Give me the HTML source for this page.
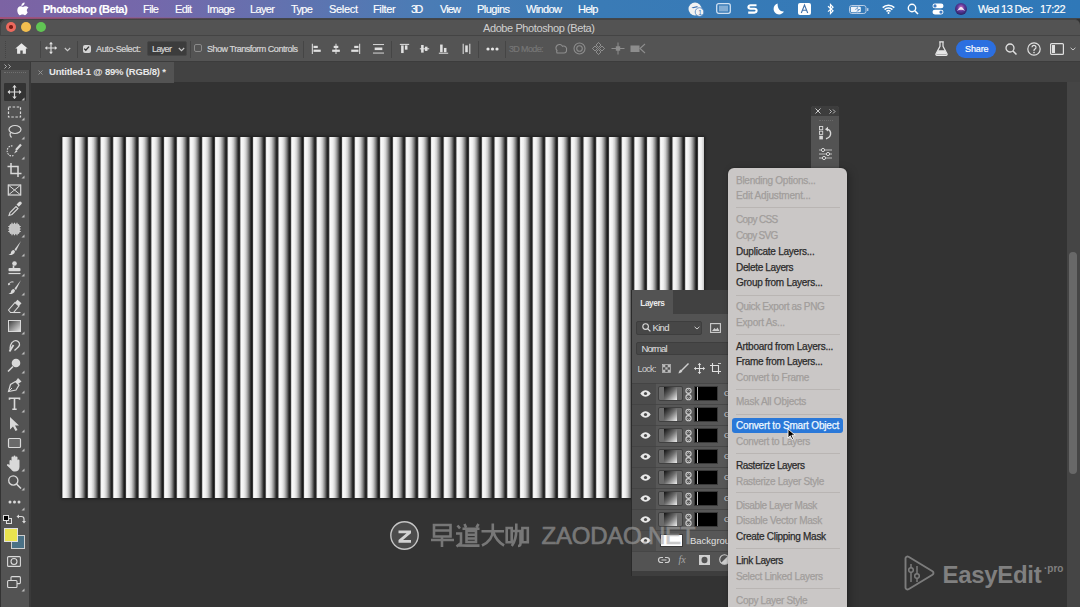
<!DOCTYPE html>
<html><head><meta charset="utf-8">
<style>
*{margin:0;padding:0;box-sizing:border-box}
html,body{width:1080px;height:607px;overflow:hidden;background:#323232;font-family:"Liberation Sans",sans-serif}
.a{position:absolute}
svg{position:absolute;overflow:visible}
#menubar{left:0;top:0;width:1080px;height:17.5px;background:linear-gradient(90deg,#7c63a3 0px,#7468ab 150px,#6670ae 260px,#4b7cb5 420px,#3a7bb6 600px,#2f78b8 1080px)}
#menubar .m{position:absolute;top:3px;font-size:11px;line-height:12px;color:#fff;white-space:nowrap;letter-spacing:-0.1px}
#titlebar{left:0;top:19px;width:1080px;height:16px;background:#535353;border-radius:6px 6px 0 0;box-shadow:inset 1px 1px 0 #444}
#opts .t{-webkit-text-stroke:0.2px currentColor}
#menubar .m{-webkit-text-stroke:0.15px currentColor}
#opts{left:0;top:35px;width:1080px;height:27px;background:#545454;border-top:1px solid #444;border-bottom:1px solid #3c3c3c}
.sep{position:absolute;top:5px;width:1px;height:17px;background:#454545}
#tabs{left:30px;top:62px;width:1050px;height:20px;background:#424242}
#tab{left:31px;top:62px;width:143px;height:21px;background:#535353}
#tool{left:1px;top:70px;width:28px;height:537px;background:#535353}
#toolhead{left:0;top:62px;width:30px;height:8px;background:#424242}
#canvasbg{left:0;top:82px;width:1067px;height:525px;background:#333333}
#doc{left:62px;top:137px;width:642px;height:361px;overflow:hidden;box-shadow:0 0 3px 1px rgba(0,0,0,.45)}
#stripes{left:-1.41px;top:0;width:660px;height:361px;background:repeating-linear-gradient(90deg,#1a1a1a 0px,#3a3a3a 1px,#e2e2e2 1.8px,#fafafa 2.6px,#eeeeee 5px,#d0d0d0 7px,#969696 9px,#606060 10.5px,#333333 11.6px,#1a1a1a 12.71px)}
#scroll{left:1067px;top:82px;width:13px;height:525px;background:#454545}
#thumb{left:1069px;top:252px;width:8px;height:222px;background:#686868;border-radius:4px}
.t{position:absolute;white-space:nowrap}
.mi{font-size:10px;line-height:12px;letter-spacing:-0.2px;-webkit-text-stroke:0.25px currentColor}
</style></head><body>
<div id="menubar" class="a">
  <svg style="left:17px;top:2px" width="11" height="14" viewBox="0 0 11 14"><path d="M7.6 0.5c0.1 1-0.3 1.9-0.9 2.5-0.6 0.7-1.5 1-2.3 1-0.1-0.9 0.3-1.9 0.9-2.5 0.6-0.6 1.5-1 2.3-1zM10.6 10.3c-0.5 1.1-1.4 2.9-2.6 2.9-1 0-1.3-0.6-2.5-0.6s-1.6 0.6-2.5 0.6C1.8 13.2 0.3 10.6 0.3 8.2c0-2.6 1.7-3.9 3.2-3.9 1 0 1.7 0.6 2.5 0.6 0.7 0 1.5-0.7 2.7-0.7 0.5 0 2 0.1 2.8 1.5-2.4 1.3-2 4.6 0.1 4.6z" fill="#fff"/></svg>
  <span class="m" style="letter-spacing:-0.465px;left:43px;font-weight:bold;">Photoshop (Beta)</span>
  <span class="m" style="letter-spacing:-0.578px;left:143px">File</span>
  <span class="m" style="letter-spacing:-0.656px;left:175px">Edit</span>
  <span class="m" style="letter-spacing:-0.645px;left:207px">Image</span>
  <span class="m" style="letter-spacing:-0.633px;left:250px">Layer</span>
  <span class="m" style="letter-spacing:-0.620px;left:291px">Type</span>
  <span class="m" style="letter-spacing:-0.316px;left:329px">Select</span>
  <span class="m" style="letter-spacing:-0.351px;left:373px">Filter</span>
  <span class="m" style="letter-spacing:-1.762px;left:411px">3D</span>
  <span class="m" style="letter-spacing:-0.885px;left:440px">View</span>
  <span class="m" style="letter-spacing:-0.513px;left:477px">Plugins</span>
  <span class="m" style="letter-spacing:-0.625px;left:526px">Window</span>
  <span class="m" style="letter-spacing:-0.775px;left:578px">Help</span>
  <!-- status icons -->
  <svg style="left:688px;top:2px" width="17" height="15" viewBox="0 0 17 15"><circle cx="7" cy="7" r="6.5" fill="#f2f2f2"/><path d="M3.5 5.5l6-1.5v1.2l-4.5 1z" fill="#3a6fb0"/><circle cx="11.5" cy="10" r="4.3" fill="#f2f2f2" stroke="#4a80c0" stroke-width="0.8"/><text x="10.2" y="12.6" font-size="6.5" fill="#3a6fb0" font-family="Liberation Sans">1</text></svg>
  <svg style="left:716px;top:3px" width="15" height="11" viewBox="0 0 15 11"><rect x="0.7" y="0.7" width="13.6" height="9.6" rx="2" fill="none" stroke="#cfe0f2" stroke-width="1.3"/><rect x="3" y="2.6" width="9" height="5.8" fill="#cfe0f2" opacity=".5"/></svg>
  <svg style="left:747px;top:3px" width="11" height="12" viewBox="0 0 11 12"><path d="M9.5 2.2H3.6c-1.4 0-2.2 0.8-2.2 1.8s0.8 1.7 2.2 1.7h3.8c1.4 0 2.2 0.8 2.2 1.9s-0.8 2-2.2 2H1.2" fill="none" stroke="#fff" stroke-width="2.1"/></svg>
  <svg style="left:773px;top:3px" width="11" height="12" viewBox="0 0 11 12"><path d="M4.6 0.6C2.2 1.3 0.6 3.5 0.6 6c0 3 2.5 5.4 5.5 5.4 2.1 0 3.9-1.2 4.8-2.9C7.6 9 4.4 6.3 4.6 0.6z" fill="#fff"/></svg>
  <svg style="left:798px;top:3px" width="13" height="12" viewBox="0 0 13 12"><rect x="0" y="0" width="13" height="12" rx="2" fill="#fff"/><path d="M3.3 10L6.5 2l3.2 8M4.5 7.3h4" fill="none" stroke="#3f6fa8" stroke-width="1.1"/></svg>
  <svg style="left:827px;top:3px" width="8" height="12" viewBox="0 0 8 12"><path d="M1 3.3l5 4.5-2.5 2.6V1.6L6 4.2 1 8.6" fill="none" stroke="#fff" stroke-width="1.2"/></svg>
  <svg style="left:849px;top:5px" width="20" height="9" viewBox="0 0 20 9"><rect x="0.5" y="0.5" width="16.5" height="8" rx="2.2" fill="none" stroke="#b8cde6" stroke-width="1"/><rect x="1.8" y="1.8" width="10" height="5.4" rx="1" fill="#eef3f9"/><rect x="18" y="3" width="1.4" height="3" rx="0.6" fill="#b8cde6"/><path d="M9.8 0.8L5.8 4.8h2.6L7 8.4l4.2-4.3H8.6z" fill="#3a78b8"/><path d="M10.3 1.2L6.8 4.5h2.4L8 7.6" fill="none" stroke="#fff" stroke-width="0.6"/></svg>
  <svg style="left:882px;top:4px" width="13" height="10" viewBox="0 0 13 10"><path d="M0.7 3.6a8.3 8.3 0 0 1 11.6 0M2.6 5.6a5.5 5.5 0 0 1 7.8 0M4.5 7.5a2.6 2.6 0 0 1 4 0" fill="none" stroke="#fff" stroke-width="1.5"/><circle cx="6.5" cy="8.9" r="1" fill="#fff"/></svg>
  <svg style="left:907px;top:3px" width="12" height="12" viewBox="0 0 12 12"><circle cx="5" cy="5" r="3.7" fill="none" stroke="#fff" stroke-width="1.4"/><path d="M7.8 7.8l3.2 3.2" stroke="#fff" stroke-width="1.6"/></svg>
  <svg style="left:932px;top:3px" width="12" height="12" viewBox="0 0 12 12"><rect x="0.5" y="0.5" width="11" height="4.8" rx="2.4" fill="#fff"/><circle cx="3" cy="2.9" r="1.6" fill="#3f7bc2"/><rect x="0.5" y="6.7" width="11" height="4.8" rx="2.4" fill="#fff"/><circle cx="9" cy="9.1" r="1.6" fill="#3f7bc2"/></svg>
  <svg style="left:955px;top:3px" width="12" height="12" viewBox="0 0 12 12"><defs><radialGradient id="sg" cx="50%" cy="40%" r="60%"><stop offset="0" stop-color="#e070c0"/><stop offset="0.5" stop-color="#5a3a9a"/><stop offset="1" stop-color="#2a2060"/></radialGradient></defs><circle cx="6" cy="6" r="6" fill="url(#sg)"/><path d="M2 8c1.5-2 2.5-4 4-4s2.5 2 4 4c-1.3-0.8-2.5-1.2-4-1.2S3.3 7.2 2 8z" fill="#fff" opacity=".85"/></svg>
  <span class="m" style="letter-spacing:-0.592px;left:978px;">Wed 13 Dec</span>
  <span class="m" style="letter-spacing:-0.508px;left:1040px">17:22</span>
</div>
<div class="a" style="left:0;top:17.5px;width:1080px;height:1.5px;background:#42464b"></div><div class="a" style="left:0;top:17.3px;width:240px;height:1.5px;background:linear-gradient(90deg,#a05078,rgba(150,90,140,0))"></div>
<div id="titlebar" class="a">
  <div class="a" style="left:6px;top:3px;width:10px;height:10px;border-radius:50%;background:#ec6a5e"><div class="a" style="left:3.2px;top:3.2px;width:3.6px;height:3.6px;border-radius:50%;background:#7a1a14"></div></div>
  <div class="a" style="left:21px;top:3px;width:10px;height:10px;border-radius:50%;background:#f4bf4f"></div>
  <div class="a" style="left:36px;top:3px;width:10px;height:10px;border-radius:50%;background:#61c554"></div>
  <span class="t" style="letter-spacing:-0.404px;left:483px;top:2.8px;font-size:11px;color:#cfcfcf;">Adobe Photoshop (Beta)</span>
</div>
<div id="opts" class="a">
  <div class="sep" style="left:5px;background:none;border-left:1px dotted #444"></div>
  <svg style="left:15px;top:7px" width="13" height="11" viewBox="0 0 13 11"><path d="M6.5 0.3L0.3 5.6h1.8V10.7h3.2V7.4h2.4v3.3h3.2V5.6h1.8z" fill="#e8e8e8"/></svg>
  <div class="sep" style="left:40px"></div>
  <svg style="left:45px;top:6px" width="12" height="12" viewBox="0 0 12 12"><path d="M6 0.5v11M0.5 6h11" stroke="#e0e0e0" stroke-width="1.1"/><path d="M6 0l-2 2.2h4zM6 12l-2-2.2h4zM0 6l2.2-2v4zM12 6l-2.2-2v4z" fill="#e0e0e0"/></svg>
  <svg style="left:64px;top:11px" width="7" height="5" viewBox="0 0 7 5"><path d="M0.8 1l2.7 2.7L6.2 1" fill="none" stroke="#c8c8c8" stroke-width="1.1"/></svg>
  <div class="sep" style="left:77px"></div>
  <div class="a" style="left:82.5px;top:8.5px;width:8.5px;height:8.5px;background:#d4d4d4;border-radius:2px"></div>
  <svg style="left:83px;top:9px" width="7" height="7" viewBox="0 0 7 7"><path d="M1.2 3.6l1.6 1.6 3.2-3.6" fill="none" stroke="#333" stroke-width="1.3"/></svg>
  <span class="t" style="letter-spacing:-0.366px;left:96px;top:8px;font-size:9px;color:#d6d6d6">Auto-Select:</span>
  <div class="a" style="left:147px;top:5px;width:40px;height:15px;background:#3c3c3c;border-radius:2px;border:1px solid #464646"></div>
  <span class="t" style="letter-spacing:-0.629px;left:152px;top:8px;font-size:9px;color:#d6d6d6">Layer</span>
  <svg style="left:178px;top:11px" width="7" height="5" viewBox="0 0 7 5"><path d="M0.8 1l2.7 2.7L6.2 1" fill="none" stroke="#c8c8c8" stroke-width="1.1"/></svg>
  <div class="sep" style="left:190px"></div>
  <div class="a" style="left:194px;top:8px;width:8px;height:8px;border:1px solid #8a8a8a;border-radius:2px"></div>
  <span class="t" style="letter-spacing:-0.479px;left:207px;top:8px;font-size:9px;color:#d6d6d6;">Show Transform Controls</span>
  <div class="sep" style="left:303px"></div>
  <svg style="left:311px;top:6px;transform:translateY(0.8px) scale(0.85)" width="11" height="12" viewBox="0 0 11 12"><path d="M0.6 0v12" stroke="#e0e0e0" stroke-width="1.2"/><rect x="2" y="2.5" width="5" height="2.6" fill="#e0e0e0"/><rect x="2" y="7" width="8.5" height="2.6" fill="#e0e0e0"/></svg>
  <svg style="left:331px;top:6px;transform:translateY(0.8px) scale(0.85)" width="10" height="12" viewBox="0 0 10 12"><path d="M5 0v12" stroke="#e0e0e0" stroke-width="1.2"/><rect x="2.3" y="2.5" width="5.4" height="2.6" fill="#e0e0e0"/><rect x="0.5" y="7" width="9" height="2.6" fill="#e0e0e0"/></svg>
  <svg style="left:350px;top:6px;transform:translateY(0.8px) scale(0.85)" width="11" height="12" viewBox="0 0 11 12"><path d="M10.4 0v12" stroke="#e0e0e0" stroke-width="1.2"/><rect x="4" y="2.5" width="5" height="2.6" fill="#e0e0e0"/><rect x="0.5" y="7" width="8.5" height="2.6" fill="#e0e0e0"/></svg>
  <svg style="left:372px;top:6px;transform:translateY(0.8px) scale(0.85)" width="13" height="12" viewBox="0 0 13 12"><path d="M0 1h13M0 11h13" stroke="#e0e0e0" stroke-width="1.1"/><rect x="2" y="4.5" width="9" height="3" fill="#e0e0e0"/></svg>
  <div class="sep" style="left:391px"></div>
  <svg style="left:399px;top:6px;transform:translateY(0.8px) scale(0.85)" width="11" height="12" viewBox="0 0 11 12"><path d="M0 0.8h11" stroke="#e0e0e0" stroke-width="1.2"/><rect x="1.5" y="2" width="3" height="9" fill="#e0e0e0"/><rect x="6" y="2" width="3" height="5" fill="#e0e0e0"/></svg>
  <svg style="left:419px;top:6px;transform:translateY(0.8px) scale(0.85)" width="11" height="12" viewBox="0 0 11 12"><path d="M0 6h11" stroke="#e0e0e0" stroke-width="1.2"/><rect x="1.5" y="1.5" width="3" height="9" fill="#e0e0e0"/><rect x="6" y="3.5" width="3" height="5" fill="#e0e0e0"/></svg>
  <svg style="left:438px;top:6px;transform:translateY(0.8px) scale(0.85)" width="11" height="12" viewBox="0 0 11 12"><path d="M0 11.2h11" stroke="#e0e0e0" stroke-width="1.2"/><rect x="1.5" y="1" width="3" height="9" fill="#e0e0e0"/><rect x="6" y="5" width="3" height="5" fill="#e0e0e0"/></svg>
  <svg style="left:462px;top:6px;transform:translateY(0.8px) scale(0.85)" width="9" height="12" viewBox="0 0 9 12"><path d="M0.6 0v12M8.4 0v12" stroke="#e0e0e0" stroke-width="1.2"/><rect x="3" y="2" width="3" height="8" fill="#e0e0e0"/></svg>
  <div class="sep" style="left:478px"></div>
  <svg style="left:486px;top:11px" width="13" height="4" viewBox="0 0 13 4"><circle cx="2" cy="2" r="1.6" fill="#e6e6e6"/><circle cx="6.5" cy="2" r="1.6" fill="#e6e6e6"/><circle cx="11" cy="2" r="1.6" fill="#e6e6e6"/></svg>
  <div class="sep" style="left:505px"></div>
  <span class="t" style="letter-spacing:-0.633px;left:509px;top:8px;font-size:9px;color:#767676">3D Mode:</span>
  <svg style="left:553px;top:6px" width="15" height="13" viewBox="0 0 15 13" opacity=".55"><path d="M4 8.5a3.5 3.5 0 1 1 5.5-4.2A3 3 0 0 1 13.5 8a2.5 2.5 0 0 1-2.5 3H4a2.5 2.5 0 0 1 0-2.5z" fill="none" stroke="#bdbdbd" stroke-width="1.1"/></svg>
  <svg style="left:573px;top:6px" width="13" height="13" viewBox="0 0 13 13" opacity=".55"><circle cx="6.5" cy="6.5" r="5.5" fill="none" stroke="#bdbdbd" stroke-width="1.1"/><circle cx="6.5" cy="6.5" r="2.8" fill="none" stroke="#bdbdbd" stroke-width="1.1"/></svg>
  <svg style="left:592px;top:6px" width="13" height="13" viewBox="0 0 13 13" opacity=".55"><path d="M6.5 0.5l2.5 2.5-2.5 2.5-2.5-2.5zM6.5 7.5l2.5 2.5-2.5 2.5-2.5-2.5zM0.5 6.5l2.5-2.5 2.5 2.5-2.5 2.5zM7.5 6.5l2.5-2.5 2.5 2.5-2.5 2.5z" fill="none" stroke="#bdbdbd" stroke-width="1"/></svg>
  <svg style="left:611px;top:6px" width="14" height="13" viewBox="0 0 14 13" opacity=".55"><path d="M7 0.5v12M0.5 6.5h13" stroke="#bdbdbd" stroke-width="1"/><rect x="4.8" y="4.3" width="4.4" height="4.4" fill="#bdbdbd"/></svg>
  <svg style="left:630px;top:7px" width="16" height="11" viewBox="0 0 16 11" opacity=".55"><rect x="0.5" y="2.5" width="9" height="6.5" fill="#bdbdbd"/><path d="M15 1l-5 4.5 5 4.5" fill="none" stroke="#bdbdbd" stroke-width="1.1"/></svg>
  <svg style="left:935px;top:5px" width="13" height="15" viewBox="0 0 13 15"><path d="M4.2 0.8h4.6M5 0.8v4.6L0.9 13a1 1 0 0 0 0.9 1.3h9.4a1 1 0 0 0 0.9-1.3L8 5.4V0.8" fill="none" stroke="#e6e6e6" stroke-width="1.2"/><path d="M3 9.3h7l2 4.3H1z" fill="#e6e6e6"/></svg>
  <div class="a" style="left:956px;top:4px;width:40px;height:18px;background:#2c6fe0;border-radius:9px"></div>
  <span class="t" style="left:965px;top:8px;font-size:9px;color:#fff;-webkit-text-stroke:0.2px #fff;letter-spacing:-0.1px">Share</span>
  <svg style="left:1005px;top:7px" width="12" height="12" viewBox="0 0 12 12"><circle cx="5" cy="5" r="4" fill="none" stroke="#e0e0e0" stroke-width="1.3"/><path d="M8 8l3.5 3.5" stroke="#e0e0e0" stroke-width="1.5"/></svg>
  <svg style="left:1027px;top:6px" width="14" height="14" viewBox="0 0 14 14"><circle cx="7" cy="7" r="6.2" fill="none" stroke="#e0e0e0" stroke-width="1.2"/><path d="M5 5.3a2 2 0 1 1 2.9 1.8c-0.6 0.3-0.9 0.7-0.9 1.4v0.5" fill="none" stroke="#e0e0e0" stroke-width="1.2"/><circle cx="7" cy="10.6" r="0.8" fill="#e0e0e0"/></svg>
  <svg style="left:1050px;top:7px" width="14" height="12" viewBox="0 0 14 12"><rect x="0.6" y="0.6" width="12.8" height="10.8" rx="1" fill="none" stroke="#e0e0e0" stroke-width="1.2"/><rect x="2" y="2" width="3" height="8" fill="#e0e0e0"/></svg>
  <svg style="left:1070px;top:11px" width="6" height="4" viewBox="0 0 6 4"><path d="M0.6 0.8L3 3 5.4 0.8" fill="none" stroke="#c8c8c8" stroke-width="1"/></svg>
</div>
<div id="canvasbg" class="a"></div>
<div id="tabs" class="a"></div>
<div id="tab" class="a">
  <svg style="left:6.5px;top:7.5px" width="5" height="5" viewBox="0 0 5 5"><path d="M0.5 0.5l4 4M4.5 0.5l-4 4" stroke="#9a9a9a" stroke-width="0.9"/></svg>
  <span class="t" style="letter-spacing:-0.188px;left:18px;top:4.3px;font-size:9.5px;color:#e8e8e8;font-weight:bold;">Untitled-1 @ 89% (RGB/8) *</span>
</div>
<div id="tool" class="a"></div>
<div id="toolicons"><div class="a" style="left:3.5px;top:83px;width:22px;height:18px;background:#333;border-radius:1px"></div>
<svg style="left:0;top:82px" width="30" height="20" viewBox="-14.5 -10 30 20"><path d="M0 -6.5v13M-6.5 0h13" stroke="#d9d9d9" stroke-width="1.2"/><path d="M0 -7l-2.2 2.4h4.4zM0 7l-2.2-2.4h4.4zM-7 0l2.4-2.2v4.4zM7 0l-2.4-2.2v4.4z" fill="#d9d9d9"/></svg>
<svg style="left:21px;top:97px" width="4" height="4" viewBox="0 0 4 4"><path d="M3.5 0.5v3h-3z" fill="#bdbdbd"/></svg>
<svg style="left:0;top:101.5px" width="30" height="20" viewBox="-14.5 -10 30 20"><rect x="-6" y="-5" width="12" height="10" fill="none" stroke="#d9d9d9" stroke-width="1.2" stroke-dasharray="2.5 1.6"/></svg>
<svg style="left:21px;top:116.5px" width="4" height="4" viewBox="0 0 4 4"><path d="M3.5 0.5v3h-3z" fill="#bdbdbd"/></svg>
<svg style="left:0;top:121px" width="30" height="20" viewBox="-14.5 -10 30 20"><ellipse cx="0.5" cy="-1.5" rx="6" ry="4" fill="none" stroke="#d9d9d9" stroke-width="1.2"/><path d="M-4 1.5c-1 2 0 4 1 5" fill="none" stroke="#d9d9d9" stroke-width="1.1"/></svg>
<svg style="left:21px;top:136px" width="4" height="4" viewBox="0 0 4 4"><path d="M3.5 0.5v3h-3z" fill="#bdbdbd"/></svg>
<svg style="left:0;top:140.5px" width="30" height="20" viewBox="-14.5 -10 30 20"><path d="M-2 -5a4.5 5 0 1 0 1 9.5" fill="none" stroke="#d9d9d9" stroke-width="1.1" stroke-dasharray="1.6 1"/><path d="M6.5 -6.5l-5 5.5" stroke="#d9d9d9" stroke-width="2.2"/><path d="M1.5 -1l-2 3.5 3.5-2z" fill="#d9d9d9"/></svg>
<svg style="left:21px;top:155.5px" width="4" height="4" viewBox="0 0 4 4"><path d="M3.5 0.5v3h-3z" fill="#bdbdbd"/></svg>
<svg style="left:0;top:160px" width="30" height="20" viewBox="-14.5 -10 30 20"><path d="M-3.5 -7v10.5H7M-7 -3.5H3.5V7" fill="none" stroke="#d9d9d9" stroke-width="1.5"/></svg>
<svg style="left:21px;top:175px" width="4" height="4" viewBox="0 0 4 4"><path d="M3.5 0.5v3h-3z" fill="#bdbdbd"/></svg>
<svg style="left:0;top:179.5px" width="30" height="20" viewBox="-14.5 -10 30 20"><rect x="-6.2" y="-5" width="12.4" height="10" fill="none" stroke="#d9d9d9" stroke-width="1.2"/><path d="M-6.2 -5l12.4 10M6.2 -5l-12.4 10" stroke="#d9d9d9" stroke-width="1"/></svg>
<svg style="left:0;top:199px" width="30" height="20" viewBox="-14.5 -10 30 20"><path d="M-5.5 6.5l1-3 6-6 2 2-6 6z" fill="none" stroke="#d9d9d9" stroke-width="1.1"/><path d="M2 -4.5l2.5-2.5a1.5 1.5 0 0 1 2.3 2.3L4.3 -2.2z" fill="#d9d9d9"/></svg>
<svg style="left:21px;top:214px" width="4" height="4" viewBox="0 0 4 4"><path d="M3.5 0.5v3h-3z" fill="#bdbdbd"/></svg>
<svg style="left:0;top:218.5px" width="30" height="20" viewBox="-14.5 -10 30 20"><rect x="-4.8" y="-4.8" width="9.6" height="9.6" rx="2" fill="#c4c4c4" stroke="#d9d9d9" stroke-width="0.8"/><path d="M-6.3 -2.5h1.5M-6.3 0h1.5M-6.3 2.5h1.5M4.8 -2.5h1.5M4.8 0h1.5M4.8 2.5h1.5M-2.5 -6.3v1.5M0 -6.3v1.5M2.5 -6.3v1.5M-2.5 4.8v1.5M0 4.8v1.5M2.5 4.8v1.5" stroke="#d9d9d9" stroke-width="0.9"/></svg>
<svg style="left:21px;top:233.5px" width="4" height="4" viewBox="0 0 4 4"><path d="M3.5 0.5v3h-3z" fill="#bdbdbd"/></svg>
<svg style="left:0;top:238px" width="30" height="20" viewBox="-14.5 -10 30 20"><path d="M6.5 -7L0 1.5l1.5 1.5z" fill="#d9d9d9"/><path d="M-0.5 2c-2 0-3 1.5-3.2 3.5l-2.3 1.5c2.5 0.5 6-0.5 6.5-3.5z" fill="#d9d9d9"/></svg>
<svg style="left:21px;top:253px" width="4" height="4" viewBox="0 0 4 4"><path d="M3.5 0.5v3h-3z" fill="#bdbdbd"/></svg>
<svg style="left:0;top:257.5px" width="30" height="20" viewBox="-14.5 -10 30 20"><circle cx="0" cy="-4.5" r="2.3" fill="#d9d9d9"/><path d="M-1 -2.5v2.5" stroke="#d9d9d9" stroke-width="1.6"/><rect x="-6" y="0" width="12" height="3.3" rx="1" fill="#d9d9d9"/><path d="M-6 5.5h12" stroke="#d9d9d9" stroke-width="1.2"/></svg>
<svg style="left:21px;top:272.5px" width="4" height="4" viewBox="0 0 4 4"><path d="M3.5 0.5v3h-3z" fill="#bdbdbd"/></svg>
<svg style="left:0;top:277px" width="30" height="20" viewBox="-14.5 -10 30 20"><path d="M6.5 -7L0 1.5l1.5 1.5z" fill="#d9d9d9"/><path d="M-0.5 2c-2 0-3 1.5-3.2 3.5l-2.3 1.5c2.5 0.5 6-0.5 6.5-3.5z" fill="#d9d9d9"/><path d="M-6 -2a4 4 0 0 1 5-3" fill="none" stroke="#d9d9d9" stroke-width="1"/><path d="M-6.5 -4l0.5 2.5 2-1.5z" fill="#d9d9d9"/></svg>
<svg style="left:21px;top:292px" width="4" height="4" viewBox="0 0 4 4"><path d="M3.5 0.5v3h-3z" fill="#bdbdbd"/></svg>
<svg style="left:0;top:296.5px" width="30" height="20" viewBox="-14.5 -10 30 20"><path d="M-6 3l6.5-7.5 4 3.5-5.5 6.5h-3z" fill="none" stroke="#d9d9d9" stroke-width="1.1"/><path d="M0.5 -4.5l2.5-2.8 4 3.5-2.5 2.8z" fill="#d9d9d9"/><path d="M-2 5.5h8" stroke="#d9d9d9" stroke-width="1.1"/></svg>
<svg style="left:21px;top:311.5px" width="4" height="4" viewBox="0 0 4 4"><path d="M3.5 0.5v3h-3z" fill="#bdbdbd"/></svg>
<svg style="left:0;top:316px" width="30" height="20" viewBox="-14.5 -10 30 20"><defs><linearGradient id="tg" x1="0" y1="0" x2="1" y2="1"><stop offset="0" stop-color="#3a3a3a"/><stop offset="1" stop-color="#e8e8e8"/></linearGradient></defs><rect x="-6" y="-5.5" width="12" height="11" fill="url(#tg)" stroke="#d9d9d9" stroke-width="1"/></svg>
<svg style="left:21px;top:331px" width="4" height="4" viewBox="0 0 4 4"><path d="M3.5 0.5v3h-3z" fill="#bdbdbd"/></svg>
<svg style="left:0;top:335.5px" width="30" height="20" viewBox="-14.5 -10 30 20"><path d="M-4 4.5c-1-3 0-8 3.5-9.5 3-1 6 1 5.5 4-0.5 2.5-3 3.5-5 5.5" fill="none" stroke="#d9d9d9" stroke-width="1.3"/><path d="M-1 -1l-4 6.5" stroke="#d9d9d9" stroke-width="1.8"/></svg>
<svg style="left:21px;top:350.5px" width="4" height="4" viewBox="0 0 4 4"><path d="M3.5 0.5v3h-3z" fill="#bdbdbd"/></svg>
<svg style="left:0;top:355px" width="30" height="20" viewBox="-14.5 -10 30 20"><circle cx="1.5" cy="-2" r="4.3" fill="#d9d9d9"/><path d="M-1.5 1.5l-5 5" stroke="#d9d9d9" stroke-width="1.6"/></svg>
<svg style="left:21px;top:370px" width="4" height="4" viewBox="0 0 4 4"><path d="M3.5 0.5v3h-3z" fill="#bdbdbd"/></svg>
<svg style="left:0;top:374.5px" width="30" height="20" viewBox="-14.5 -10 30 20"><path d="M-6 6.5l2-7 5-3 3.5 3.5-3 5z" fill="none" stroke="#d9d9d9" stroke-width="1.2"/><path d="M1 -3.5l2.5-3.5 3.5 3.5-3.5 2.5z" fill="#d9d9d9"/><path d="M-6 6.5l3.5-3.5" stroke="#d9d9d9" stroke-width="1"/></svg>
<svg style="left:21px;top:389.5px" width="4" height="4" viewBox="0 0 4 4"><path d="M3.5 0.5v3h-3z" fill="#bdbdbd"/></svg>
<svg style="left:0;top:394px" width="30" height="20" viewBox="-14.5 -10 30 20"><path d="M-5 -4.2v-1.5h10v1.5M0 -5.7v11M-2.2 5.3h4.4" fill="none" stroke="#d9d9d9" stroke-width="1.6"/></svg>
<svg style="left:21px;top:409px" width="4" height="4" viewBox="0 0 4 4"><path d="M3.5 0.5v3h-3z" fill="#bdbdbd"/></svg>
<svg style="left:0;top:413.5px" width="30" height="20" viewBox="-14.5 -10 30 20"><path d="M-4.5 -7v12.5l3-3 2.5 4.5 2-1-2.5-4.5h4z" fill="#d9d9d9"/></svg>
<svg style="left:21px;top:428.5px" width="4" height="4" viewBox="0 0 4 4"><path d="M3.5 0.5v3h-3z" fill="#bdbdbd"/></svg>
<svg style="left:0;top:433px" width="30" height="20" viewBox="-14.5 -10 30 20"><rect x="-6" y="-4.5" width="12" height="9" rx="1" fill="#6a6a6a" stroke="#d9d9d9" stroke-width="1.2"/></svg>
<svg style="left:21px;top:448px" width="4" height="4" viewBox="0 0 4 4"><path d="M3.5 0.5v3h-3z" fill="#bdbdbd"/></svg>
<svg style="left:0;top:454px" width="30" height="20" viewBox="-14.5 -10 30 20"><path d="M-5 1v-4a1 1 0 0 1 2 0v2-5.5a1 1 0 0 1 2 0v5-6a1 1 0 0 1 2 0v6-5a1 1 0 0 1 2 0v5.5-2.5a1 1 0 0 1 2 0V3c0 3-2 4.5-4.5 4.5-2 0-3-0.8-4-2.3L-7.5 1.5a1 1 0 0 1 1.7-1z" fill="#d9d9d9"/></svg>
<svg style="left:21px;top:467.5px" width="4" height="4" viewBox="0 0 4 4"><path d="M3.5 0.5v3h-3z" fill="#bdbdbd"/></svg>
<svg style="left:0;top:472px" width="30" height="20" viewBox="-14.5 -10 30 20"><circle cx="-1.2" cy="-1.5" r="4.6" fill="none" stroke="#d9d9d9" stroke-width="1.3"/><path d="M2 2l4.5 4.5" stroke="#d9d9d9" stroke-width="1.6"/></svg>
<svg style="left:21px;top:487px" width="4" height="4" viewBox="0 0 4 4"><path d="M3.5 0.5v3h-3z" fill="#bdbdbd"/></svg>
<svg style="left:0;top:491.5px" width="30" height="20" viewBox="-14.5 -10 30 20"><circle cx="-4.5" cy="0" r="1.5" fill="#d9d9d9"/><circle cx="0" cy="0" r="1.5" fill="#d9d9d9"/><circle cx="4.5" cy="0" r="1.5" fill="#d9d9d9"/></svg>
<svg style="left:21px;top:506.5px" width="4" height="4" viewBox="0 0 4 4"><path d="M3.5 0.5v3h-3z" fill="#bdbdbd"/></svg>
<div class="a" style="left:6px;top:517.5px;width:6px;height:6px;border:1px solid #ddd;background:#555"></div><div class="a" style="left:3px;top:514.5px;width:6px;height:6px;background:#000;border:1px solid #ddd"></div>
<svg style="left:16px;top:513.5px" width="10" height="10" viewBox="0 0 10 10"><path d="M2 2.5h3.5a2.5 2.5 0 0 1 2.5 2.5v2.5" fill="none" stroke="#d9d9d9" stroke-width="1.2"/><path d="M0.5 2.5l2.5-2v4zM8 9.5l-2-2.5h4z" fill="#d9d9d9"/></svg>
<div class="a" style="left:11px;top:535px;width:14px;height:14px;background:#4a7186;border:1px solid #cfcfcf"></div>
<div class="a" style="left:3.5px;top:527.5px;width:14px;height:14px;background:#e9e34f;border:1px solid #e0e0e0"></div>
<svg style="left:7px;top:556px" width="14" height="11" viewBox="0 0 14 11"><rect x="0.6" y="0.6" width="12.8" height="9.8" rx="1" fill="none" stroke="#d9d9d9" stroke-width="1.1"/><circle cx="7" cy="5.5" r="3" fill="none" stroke="#d9d9d9" stroke-width="1.1"/></svg>
<svg style="left:7px;top:576px" width="14" height="13" viewBox="0 0 14 13"><rect x="4" y="0.6" width="9.4" height="7" rx="1" fill="#4f4f4f" stroke="#d9d9d9" stroke-width="1.1"/><rect x="0.6" y="4.5" width="9.4" height="7" rx="1" fill="#4f4f4f" stroke="#d9d9d9" stroke-width="1.1"/></svg>
<svg style="left:21px;top:588px" width="4" height="4" viewBox="0 0 4 4"><path d="M3.5 0.5v3h-3z" fill="#bdbdbd"/></svg></div>
<div class="a" style="left:29px;top:62px;width:2px;height:545px;background:#3a3a3a"></div>
<div id="toolhead" class="a"><svg style="left:4px;top:2px" width="8" height="5" viewBox="0 0 8 5"><path d="M0.5 0.5l2 2-2 2M4.5 0.5l2 2-2 2" fill="none" stroke="#bbb" stroke-width="0.9"/></svg></div>
<div class="a" style="left:4px;top:72px;width:22px;height:2px;border-top:1px dotted #707070"></div>
<div id="doc" class="a"><div id="stripes" class="a"></div></div>
<div class="a" style="left:811px;top:106px;width:28px;height:63px;background:#535353;border-radius:3px 3px 0 0;overflow:hidden">
  <div class="a" style="left:0;top:0;width:28px;height:10px;background:#3d3d3d"></div>
  <svg style="left:4px;top:2px" width="6" height="6" viewBox="0 0 6 6"><path d="M0.5 0.5l5 5M5.5 0.5l-5 5" stroke="#ccc" stroke-width="1"/></svg>
  <svg style="left:18px;top:3px" width="7" height="5" viewBox="0 0 7 5"><path d="M0.5 0.5l2 2-2 2M4 0.5l2 2-2 2" fill="none" stroke="#ccc" stroke-width="0.9"/></svg>
  <div class="a" style="left:7.7px;top:14px;width:14px;height:1px;border-top:1px dotted #6a6a6a"></div>
  <svg style="left:8px;top:20px" width="13" height="14" viewBox="0 0 13 14"><rect x="0.5" y="0.5" width="3.2" height="3.2" fill="none" stroke="#d9d9d9" stroke-width="0.9"/><rect x="0.5" y="5.2" width="3.2" height="3.2" fill="none" stroke="#d9d9d9" stroke-width="0.9"/><rect x="0.3" y="9.8" width="3.6" height="3.6" fill="#d9d9d9"/><path d="M8 3.2c3 0.3 4 3 3.5 5.5-0.4 2-1.8 3.3-4.5 4" fill="none" stroke="#d9d9d9" stroke-width="1.4"/><path d="M6 3.2l3-2.4v4.8z" fill="#d9d9d9"/></svg>
  <svg style="left:8px;top:42px" width="13" height="12" viewBox="0 0 13 12"><path d="M0 2h13M0 6h13M0 10h13" stroke="#d9d9d9" stroke-width="0.8"/><circle cx="4" cy="2" r="1.6" fill="#4f4f4f" stroke="#d9d9d9" stroke-width="1"/><circle cx="9" cy="6" r="1.6" fill="#4f4f4f" stroke="#d9d9d9" stroke-width="1"/><circle cx="5" cy="10" r="1.6" fill="#4f4f4f" stroke="#d9d9d9" stroke-width="1"/></svg>
</div>
<div class="a" style="left:630.5px;top:290px;width:100px;height:285.5px;background:#535353;border-left:1.5px solid #2a2a2a;overflow:hidden">
  <div class="a" style="left:0;top:0;width:100px;height:24px;background:#414141"></div>
  <div class="a" style="left:0;top:0;width:41px;height:24px;background:#535353"></div>
  <span class="t" style="letter-spacing:-0.433px;left:8.8px;top:8px;font-size:8.3px;color:#ececec;font-weight:bold">Layers</span>
  <div class="a" style="left:4px;top:30.5px;width:66px;height:14px;background:#474747;border:1px solid #3e3e3e;border-radius:2px"></div>
  <svg style="left:10px;top:33px" width="9" height="9" viewBox="0 0 9 9"><circle cx="3.6" cy="3.6" r="2.8" fill="none" stroke="#dcdcdc" stroke-width="1.1"/><path d="M5.6 5.6l2.8 2.8" stroke="#dcdcdc" stroke-width="1.3"/></svg>
  <span class="t" style="letter-spacing:-0.672px;left:21px;top:31.5px;font-size:9.5px;color:#e0e0e0">Kind</span>
  <svg style="left:62px;top:36px" width="6" height="4" viewBox="0 0 6 4"><path d="M0.6 0.8L3 3 5.4 0.8" fill="none" stroke="#d0d0d0" stroke-width="1"/></svg>
  <svg style="left:78px;top:33px" width="11" height="10" viewBox="0 0 11 10"><rect x="0.6" y="0.6" width="9.8" height="8.8" fill="none" stroke="#cfcfcf" stroke-width="1.1"/><path d="M2 8l2.5-3 1.5 1.5 1.5-2 2 3.5z" fill="#cfcfcf"/></svg>
  <div class="a" style="left:4px;top:52px;width:110px;height:13px;background:#474747;border:1px solid #3e3e3e;border-radius:2px"></div>
  <span class="t" style="letter-spacing:-0.925px;left:10px;top:53px;font-size:9.5px;color:#e0e0e0">Normal</span>
  <span class="t" style="letter-spacing:-0.629px;left:6px;top:74px;font-size:9px;color:#d0d0d0">Lock:</span>
  <svg style="left:30px;top:74px" width="9" height="9" viewBox="0 0 9 9"><rect x="0.5" y="0.5" width="8" height="8" fill="none" stroke="#bbb" stroke-width="0.8"/><rect x="1" y="1" width="2.3" height="2.3" fill="#bbb"/><rect x="5.7" y="1" width="2.3" height="2.3" fill="#bbb"/><rect x="3.3" y="3.3" width="2.3" height="2.3" fill="#bbb"/><rect x="1" y="5.7" width="2.3" height="2.3" fill="#bbb"/><rect x="5.7" y="5.7" width="2.3" height="2.3" fill="#bbb"/></svg>
  <svg style="left:46px;top:73px" width="11" height="11" viewBox="0 0 11 11"><path d="M10.5 0.5L4 7" stroke="#cfcfcf" stroke-width="1.5"/><path d="M3.5 6.5c-1.5 0-2.5 1.5-3 4 2-0.5 3.8-1.5 4-3z" fill="#cfcfcf"/></svg>
  <svg style="left:62px;top:73px" width="11" height="11" viewBox="0 0 11 11"><path d="M5.5 0.5v10M0.5 5.5h10" stroke="#e0e0e0" stroke-width="1.1"/><path d="M5.5 0l-1.8 2h3.6zM5.5 11l-1.8-2h3.6zM0 5.5l2-1.8v3.6zM11 5.5l-2-1.8v3.6z" fill="#e0e0e0"/></svg>
  <svg style="left:78px;top:73px" width="12" height="11" viewBox="0 0 12 11"><path d="M2.5 0v8.5H11M0 2.5h8.5V11" fill="none" stroke="#e0e0e0" stroke-width="1.1"/><path d="M8 0.5l3 0" stroke="#e0e0e0" stroke-width="0.8"/></svg>
  <div class="a" style="left:0;top:92.5px;width:24px;height:21px;background:#4c4c4c;border-top:1px solid #444"></div>
<div class="a" style="left:24px;top:92.5px;width:80px;height:21px;background:#575757;border-top:1px solid #474747"></div>
<svg style="left:8px;top:100.0px" width="11" height="7" viewBox="0 0 11 7"><path d="M0.3 3.5C2 1 3.7 0.3 5.5 0.3S9 1 10.7 3.5C9 6 7.3 6.7 5.5 6.7S2 6 0.3 3.5z" fill="#e8e8e8"/><circle cx="5.5" cy="3.5" r="1.6" fill="#4c4c4c"/></svg>
<div class="a" style="left:26px;top:96.0px;width:25px;height:15px;background:#6b6b6b;border:1px solid #404040;border-radius:2px"></div>
<div class="a" style="left:32px;top:97.0px;width:13px;height:13px;background:linear-gradient(135deg,#111 0%,#6e6e6e 50%,#f2f2f2 100%)"></div>
<svg style="left:53px;top:96.5px" width="7" height="14" viewBox="0 0 7 14"><circle cx="3.5" cy="3.8" r="2.6" fill="none" stroke="#cfcfcf" stroke-width="1.1"/><circle cx="3.5" cy="10.2" r="2.6" fill="none" stroke="#cfcfcf" stroke-width="1.1"/><path d="M2.3 3.6l1.2-1 1.2 1M2.3 10.4l1.2 1 1.2-1" fill="none" stroke="#cfcfcf" stroke-width="0.8"/></svg>
<div class="a" style="left:62px;top:96.0px;width:24.5px;height:14.5px;background:#000;border:1px solid #3a3a3a"></div>
<div class="a" style="left:65.5px;top:97.0px;width:1.2px;height:12.5px;background:#b8b8b8"></div>
<span class="t" style="left:92.5px;top:98.5px;font-size:8px;color:#d8d8d8">G</span><div class="a" style="left:0;top:113.5px;width:24px;height:21px;background:#4c4c4c;border-top:1px solid #444"></div>
<div class="a" style="left:24px;top:113.5px;width:80px;height:21px;background:#575757;border-top:1px solid #474747"></div>
<svg style="left:8px;top:121.0px" width="11" height="7" viewBox="0 0 11 7"><path d="M0.3 3.5C2 1 3.7 0.3 5.5 0.3S9 1 10.7 3.5C9 6 7.3 6.7 5.5 6.7S2 6 0.3 3.5z" fill="#e8e8e8"/><circle cx="5.5" cy="3.5" r="1.6" fill="#4c4c4c"/></svg>
<div class="a" style="left:26px;top:117.0px;width:25px;height:15px;background:#6b6b6b;border:1px solid #404040;border-radius:2px"></div>
<div class="a" style="left:32px;top:118.0px;width:13px;height:13px;background:linear-gradient(135deg,#111 0%,#6e6e6e 50%,#f2f2f2 100%)"></div>
<svg style="left:53px;top:117.5px" width="7" height="14" viewBox="0 0 7 14"><circle cx="3.5" cy="3.8" r="2.6" fill="none" stroke="#cfcfcf" stroke-width="1.1"/><circle cx="3.5" cy="10.2" r="2.6" fill="none" stroke="#cfcfcf" stroke-width="1.1"/><path d="M2.3 3.6l1.2-1 1.2 1M2.3 10.4l1.2 1 1.2-1" fill="none" stroke="#cfcfcf" stroke-width="0.8"/></svg>
<div class="a" style="left:62px;top:117.0px;width:24.5px;height:14.5px;background:#000;border:1px solid #3a3a3a"></div>
<div class="a" style="left:65.5px;top:118.0px;width:1.2px;height:12.5px;background:#b8b8b8"></div>
<span class="t" style="left:92.5px;top:119.5px;font-size:8px;color:#d8d8d8">G</span><div class="a" style="left:0;top:134.5px;width:24px;height:21px;background:#4c4c4c;border-top:1px solid #444"></div>
<div class="a" style="left:24px;top:134.5px;width:80px;height:21px;background:#575757;border-top:1px solid #474747"></div>
<svg style="left:8px;top:142.0px" width="11" height="7" viewBox="0 0 11 7"><path d="M0.3 3.5C2 1 3.7 0.3 5.5 0.3S9 1 10.7 3.5C9 6 7.3 6.7 5.5 6.7S2 6 0.3 3.5z" fill="#e8e8e8"/><circle cx="5.5" cy="3.5" r="1.6" fill="#4c4c4c"/></svg>
<div class="a" style="left:26px;top:138.0px;width:25px;height:15px;background:#6b6b6b;border:1px solid #404040;border-radius:2px"></div>
<div class="a" style="left:32px;top:139.0px;width:13px;height:13px;background:linear-gradient(135deg,#111 0%,#6e6e6e 50%,#f2f2f2 100%)"></div>
<svg style="left:53px;top:138.5px" width="7" height="14" viewBox="0 0 7 14"><circle cx="3.5" cy="3.8" r="2.6" fill="none" stroke="#cfcfcf" stroke-width="1.1"/><circle cx="3.5" cy="10.2" r="2.6" fill="none" stroke="#cfcfcf" stroke-width="1.1"/><path d="M2.3 3.6l1.2-1 1.2 1M2.3 10.4l1.2 1 1.2-1" fill="none" stroke="#cfcfcf" stroke-width="0.8"/></svg>
<div class="a" style="left:62px;top:138.0px;width:24.5px;height:14.5px;background:#000;border:1px solid #3a3a3a"></div>
<div class="a" style="left:65.5px;top:139.0px;width:1.2px;height:12.5px;background:#b8b8b8"></div>
<span class="t" style="left:92.5px;top:140.5px;font-size:8px;color:#d8d8d8">G</span><div class="a" style="left:0;top:155.5px;width:24px;height:21px;background:#4c4c4c;border-top:1px solid #444"></div>
<div class="a" style="left:24px;top:155.5px;width:80px;height:21px;background:#575757;border-top:1px solid #474747"></div>
<svg style="left:8px;top:163.0px" width="11" height="7" viewBox="0 0 11 7"><path d="M0.3 3.5C2 1 3.7 0.3 5.5 0.3S9 1 10.7 3.5C9 6 7.3 6.7 5.5 6.7S2 6 0.3 3.5z" fill="#e8e8e8"/><circle cx="5.5" cy="3.5" r="1.6" fill="#4c4c4c"/></svg>
<div class="a" style="left:26px;top:159.0px;width:25px;height:15px;background:#6b6b6b;border:1px solid #404040;border-radius:2px"></div>
<div class="a" style="left:32px;top:160.0px;width:13px;height:13px;background:linear-gradient(135deg,#111 0%,#6e6e6e 50%,#f2f2f2 100%)"></div>
<svg style="left:53px;top:159.5px" width="7" height="14" viewBox="0 0 7 14"><circle cx="3.5" cy="3.8" r="2.6" fill="none" stroke="#cfcfcf" stroke-width="1.1"/><circle cx="3.5" cy="10.2" r="2.6" fill="none" stroke="#cfcfcf" stroke-width="1.1"/><path d="M2.3 3.6l1.2-1 1.2 1M2.3 10.4l1.2 1 1.2-1" fill="none" stroke="#cfcfcf" stroke-width="0.8"/></svg>
<div class="a" style="left:62px;top:159.0px;width:24.5px;height:14.5px;background:#000;border:1px solid #3a3a3a"></div>
<div class="a" style="left:65.5px;top:160.0px;width:1.2px;height:12.5px;background:#b8b8b8"></div>
<span class="t" style="left:92.5px;top:161.5px;font-size:8px;color:#d8d8d8">G</span><div class="a" style="left:0;top:176.5px;width:24px;height:21px;background:#4c4c4c;border-top:1px solid #444"></div>
<div class="a" style="left:24px;top:176.5px;width:80px;height:21px;background:#575757;border-top:1px solid #474747"></div>
<svg style="left:8px;top:184.0px" width="11" height="7" viewBox="0 0 11 7"><path d="M0.3 3.5C2 1 3.7 0.3 5.5 0.3S9 1 10.7 3.5C9 6 7.3 6.7 5.5 6.7S2 6 0.3 3.5z" fill="#e8e8e8"/><circle cx="5.5" cy="3.5" r="1.6" fill="#4c4c4c"/></svg>
<div class="a" style="left:26px;top:180.0px;width:25px;height:15px;background:#6b6b6b;border:1px solid #404040;border-radius:2px"></div>
<div class="a" style="left:32px;top:181.0px;width:13px;height:13px;background:linear-gradient(135deg,#111 0%,#6e6e6e 50%,#f2f2f2 100%)"></div>
<svg style="left:53px;top:180.5px" width="7" height="14" viewBox="0 0 7 14"><circle cx="3.5" cy="3.8" r="2.6" fill="none" stroke="#cfcfcf" stroke-width="1.1"/><circle cx="3.5" cy="10.2" r="2.6" fill="none" stroke="#cfcfcf" stroke-width="1.1"/><path d="M2.3 3.6l1.2-1 1.2 1M2.3 10.4l1.2 1 1.2-1" fill="none" stroke="#cfcfcf" stroke-width="0.8"/></svg>
<div class="a" style="left:62px;top:180.0px;width:24.5px;height:14.5px;background:#000;border:1px solid #3a3a3a"></div>
<div class="a" style="left:65.5px;top:181.0px;width:1.2px;height:12.5px;background:#b8b8b8"></div>
<span class="t" style="left:92.5px;top:182.5px;font-size:8px;color:#d8d8d8">G</span><div class="a" style="left:0;top:197.5px;width:24px;height:21px;background:#4c4c4c;border-top:1px solid #444"></div>
<div class="a" style="left:24px;top:197.5px;width:80px;height:21px;background:#575757;border-top:1px solid #474747"></div>
<svg style="left:8px;top:205.0px" width="11" height="7" viewBox="0 0 11 7"><path d="M0.3 3.5C2 1 3.7 0.3 5.5 0.3S9 1 10.7 3.5C9 6 7.3 6.7 5.5 6.7S2 6 0.3 3.5z" fill="#e8e8e8"/><circle cx="5.5" cy="3.5" r="1.6" fill="#4c4c4c"/></svg>
<div class="a" style="left:26px;top:201.0px;width:25px;height:15px;background:#6b6b6b;border:1px solid #404040;border-radius:2px"></div>
<div class="a" style="left:32px;top:202.0px;width:13px;height:13px;background:linear-gradient(135deg,#111 0%,#6e6e6e 50%,#f2f2f2 100%)"></div>
<svg style="left:53px;top:201.5px" width="7" height="14" viewBox="0 0 7 14"><circle cx="3.5" cy="3.8" r="2.6" fill="none" stroke="#cfcfcf" stroke-width="1.1"/><circle cx="3.5" cy="10.2" r="2.6" fill="none" stroke="#cfcfcf" stroke-width="1.1"/><path d="M2.3 3.6l1.2-1 1.2 1M2.3 10.4l1.2 1 1.2-1" fill="none" stroke="#cfcfcf" stroke-width="0.8"/></svg>
<div class="a" style="left:62px;top:201.0px;width:24.5px;height:14.5px;background:#000;border:1px solid #3a3a3a"></div>
<div class="a" style="left:65.5px;top:202.0px;width:1.2px;height:12.5px;background:#b8b8b8"></div>
<span class="t" style="left:92.5px;top:203.5px;font-size:8px;color:#d8d8d8">G</span><div class="a" style="left:0;top:218.5px;width:24px;height:21px;background:#4c4c4c;border-top:1px solid #444"></div>
<div class="a" style="left:24px;top:218.5px;width:80px;height:21px;background:#575757;border-top:1px solid #474747"></div>
<svg style="left:8px;top:226.0px" width="11" height="7" viewBox="0 0 11 7"><path d="M0.3 3.5C2 1 3.7 0.3 5.5 0.3S9 1 10.7 3.5C9 6 7.3 6.7 5.5 6.7S2 6 0.3 3.5z" fill="#e8e8e8"/><circle cx="5.5" cy="3.5" r="1.6" fill="#4c4c4c"/></svg>
<div class="a" style="left:26px;top:222.0px;width:25px;height:15px;background:#6b6b6b;border:1px solid #404040;border-radius:2px"></div>
<div class="a" style="left:32px;top:223.0px;width:13px;height:13px;background:linear-gradient(135deg,#111 0%,#6e6e6e 50%,#f2f2f2 100%)"></div>
<svg style="left:53px;top:222.5px" width="7" height="14" viewBox="0 0 7 14"><circle cx="3.5" cy="3.8" r="2.6" fill="none" stroke="#cfcfcf" stroke-width="1.1"/><circle cx="3.5" cy="10.2" r="2.6" fill="none" stroke="#cfcfcf" stroke-width="1.1"/><path d="M2.3 3.6l1.2-1 1.2 1M2.3 10.4l1.2 1 1.2-1" fill="none" stroke="#cfcfcf" stroke-width="0.8"/></svg>
<div class="a" style="left:62px;top:222.0px;width:24.5px;height:14.5px;background:#000;border:1px solid #3a3a3a"></div>
<div class="a" style="left:65.5px;top:223.0px;width:1.2px;height:12.5px;background:#b8b8b8"></div>
<span class="t" style="left:92.5px;top:224.5px;font-size:8px;color:#d8d8d8">G</span>
  <div class="a" style="left:0;top:239.5px;width:24px;height:21px;background:#4c4c4c;border-top:1px solid #444"></div>
  <div class="a" style="left:24px;top:239.5px;width:80px;height:21px;background:#575757;border-top:1px solid #474747"></div>
  <svg style="left:8px;top:247.0px" width="11" height="7" viewBox="0 0 11 7"><path d="M0.3 3.5C2 1 3.7 0.3 5.5 0.3S9 1 10.7 3.5C9 6 7.3 6.7 5.5 6.7S2 6 0.3 3.5z" fill="#e8e8e8"/><circle cx="5.5" cy="3.5" r="1.6" fill="#4c4c4c"/></svg>
  <div class="a" style="left:28.5px;top:243.5px;width:23px;height:13px;background:#fff;border:1px solid #3a3a3a"></div>
  <span class="t" style="left:58.5px;top:244.5px;font-size:9.5px;color:#e0e0e0">Background</span>
  <div class="a" style="left:0;top:261px;width:100px;height:20px;background:#535353;border-top:1px solid #464646"></div>
  <svg style="left:26px;top:266px" width="12" height="8" viewBox="0 0 12 8"><path d="M5 1.5H3a2.5 2.5 0 0 0 0 5h2M7 1.5h2a2.5 2.5 0 0 1 0 5H7M3.5 4h5" fill="none" stroke="#cfcfcf" stroke-width="1.2"/></svg>
  <span class="t" style="left:47px;top:264px;font-size:10px;color:#a8a8a8;font-style:italic;font-family:'Liberation Serif',serif">fx</span>
  <svg style="left:67px;top:265px" width="11" height="10" viewBox="0 0 11 10"><rect x="0" y="0" width="11" height="10" fill="#cfcfcf"/><ellipse cx="5.5" cy="5" rx="3" ry="3.2" fill="#535353"/></svg>
  <svg style="left:87px;top:264px" width="11" height="11" viewBox="0 0 11 11"><circle cx="5.5" cy="5.5" r="4.8" fill="none" stroke="#cfcfcf" stroke-width="1.1"/><path d="M9 2a4.8 4.8 0 0 1-6.8 6.8z" fill="#cfcfcf"/></svg>
  <div class="a" style="left:0;top:281px;width:100px;height:5px;background:#3e3e3e"></div>
</div>
<svg style="left:390px;top:521px" width="30" height="30" viewBox="0 0 30 30"><circle cx="14.5" cy="14.5" r="13.7" fill="rgba(255,255,255,0.12)" stroke="rgba(255,255,255,0.7)" stroke-width="1.4"/><path d="M8.5 9.5h12.5v2.8L13 19h8v2.8H8.5V19l8-6.7h-8z" fill="rgba(255,255,255,0.75)"/></svg>
<svg style="left:425px;top:518px" width="110" height="34" viewBox="425 518 110 34" opacity="0.6" fill="none" stroke="#a5a5a5" stroke-width="2.6" stroke-linecap="butt">
 <path d="M434 525h16.5v11.5H434zM434 530.5h16.5M431 540h23M442 536.5V547"/>
 <path d="M457.5 525.5l2.5 3M456 533.5h5v9.5l-4.5 3.5M458 545.3c3 0.3 5 0.3 9 0.3h12.5M464.5 524l1.5 3.5M478.5 524l-2 3.5M462.5 528.7h17M466.5 531v11h9.5v-11zM466.5 534.7h9.5M466.5 538.5h9.5"/>
 <path d="M481.5 531.2h22.5M492.8 523.5v7c0 6-3.5 11.5-10.8 15M493.3 532c2 6 5.5 10.5 10.8 13.5"/>
 <path d="M506.7 528v14.3h5V528zM512.3 531h8.2v12.5c0 1.5-0.7 2.5-2.5 2.5M516.3 523.5v6c0 7-1.2 12-4.5 16.5M522.4 528v14.3h5.4V528z"/>
</svg>
<span class="t" style="letter-spacing:-0.224px;left:541.5px;top:522px;font-size:24px;color:#a5a5a5;-webkit-text-stroke:0.7px #a5a5a5;opacity:0.6">ZAODAO.NET</span>
<div class="a" style="left:728px;top:168.3px;width:118.5px;height:460px;background:#cac7c6;border-radius:6px;box-shadow:0 0 2px rgba(0,0,0,.3),3px 2px 8px rgba(0,0,0,.25)">
<span class="t mi" style="letter-spacing:-0.261px;left:8px;top:6.7px;color:#a19d9b">Blending Options...</span><span class="t mi" style="letter-spacing:-0.178px;left:8px;top:22.1px;color:#a19d9b">Edit Adjustment...</span><div class="a" style="left:7.7px;top:38.8px;width:104px;height:1px;background:#b9b5b3"></div><span class="t mi" style="letter-spacing:-0.641px;left:8px;top:46.1px;color:#a19d9b">Copy CSS</span><span class="t mi" style="letter-spacing:-0.721px;left:8px;top:61.8px;color:#a19d9b">Copy SVG</span><span class="t mi" style="letter-spacing:-0.229px;left:8px;top:77.5px;color:#2b2b2b">Duplicate Layers...</span><span class="t mi" style="letter-spacing:-0.342px;left:8px;top:93.3px;color:#2b2b2b">Delete Layers</span><span class="t mi" style="letter-spacing:-0.263px;left:8px;top:109.0px;color:#2b2b2b">Group from Layers...</span><div class="a" style="left:7.7px;top:126.3px;width:104px;height:1px;background:#b9b5b3"></div><span class="t mi" style="letter-spacing:-0.346px;left:8px;top:133.0px;color:#a19d9b">Quick Export as PNG</span><span class="t mi" style="letter-spacing:-0.195px;left:8px;top:148.7px;color:#a19d9b">Export As...</span><div class="a" style="left:7.7px;top:165.4px;width:104px;height:1px;background:#b9b5b3"></div><span class="t mi" style="letter-spacing:-0.226px;left:8px;top:172.5px;color:#2b2b2b">Artboard from Layers...</span><span class="t mi" style="letter-spacing:-0.322px;left:8px;top:188.2px;color:#2b2b2b">Frame from Layers...</span><span class="t mi" style="letter-spacing:-0.301px;left:8px;top:203.9px;color:#a19d9b">Convert to Frame</span><div class="a" style="left:7.7px;top:221.2px;width:104px;height:1px;background:#b9b5b3"></div><span class="t mi" style="letter-spacing:-0.241px;left:8px;top:228.0px;color:#a19d9b">Mask All Objects</span><div class="a" style="left:7.7px;top:245.4px;width:104px;height:1px;background:#b9b5b3"></div><div class="a" style="left:3.5px;top:249.5px;width:111px;height:15px;background:#2a78d8;border-radius:3px"></div><span class="t mi" style="letter-spacing:-0.180px;left:8px;top:252.1px;color:#eef8ff">Convert to Smart Object</span><span class="t mi" style="letter-spacing:-0.290px;left:8px;top:267.5px;color:#a19d9b">Convert to Layers</span><div class="a" style="left:7.7px;top:285.0px;width:104px;height:1px;background:#b9b5b3"></div><span class="t mi" style="letter-spacing:-0.409px;left:8px;top:292.0px;color:#2b2b2b">Rasterize Layers</span><span class="t mi" style="letter-spacing:-0.337px;left:8px;top:307.5px;color:#a19d9b">Rasterize Layer Style</span><div class="a" style="left:7.7px;top:324.0px;width:104px;height:1px;background:#b9b5b3"></div><span class="t mi" style="letter-spacing:-0.383px;left:8px;top:331.3px;color:#a19d9b">Disable Layer Mask</span><span class="t mi" style="letter-spacing:-0.270px;left:8px;top:347.1px;color:#a19d9b">Disable Vector Mask</span><span class="t mi" style="letter-spacing:-0.290px;left:8px;top:362.9px;color:#2b2b2b">Create Clipping Mask</span><div class="a" style="left:7.7px;top:380.1px;width:104px;height:1px;background:#b9b5b3"></div><span class="t mi" style="letter-spacing:-0.384px;left:8px;top:386.8px;color:#2b2b2b">Link Layers</span><span class="t mi" style="letter-spacing:-0.308px;left:8px;top:402.7px;color:#a19d9b">Select Linked Layers</span><div class="a" style="left:7.7px;top:420.2px;width:104px;height:1px;background:#b9b5b3"></div><span class="t mi" style="letter-spacing:-0.310px;left:8px;top:426.5px;color:#a19d9b">Copy Layer Style</span>
</div>
<svg style="left:787px;top:428px" width="10" height="12" viewBox="0 0 10 12"><path d="M1 1v9l2.3-2.2 1.7 3.7 1.5-0.7-1.6-3.6h3.3z" fill="#000" stroke="#fff" stroke-width="0.9"/></svg>
<svg style="left:903px;top:555px" width="32" height="37" viewBox="0 0 32 37"><path d="M2.5 3.5c0-1.6 1.7-2.5 3-1.7l24 14.5c1.3 0.8 1.3 2.6 0 3.4l-24 14.5c-1.3 0.8-3-0.1-3-1.7z" fill="none" stroke="#7c7c7c" stroke-width="1.9" stroke-linejoin="round"/><path d="M8 9v18M14 11v16" stroke="#7c7c7c" stroke-width="1.5"/><circle cx="8" cy="15" r="2.3" fill="#333" stroke="#7c7c7c" stroke-width="1.5"/><circle cx="14" cy="21" r="2.3" fill="#333" stroke="#7c7c7c" stroke-width="1.5"/></svg>
<span class="t" style="letter-spacing:-0.313px;left:942.5px;top:560.5px;font-size:24px;color:#808080;font-weight:bold">EasyEdit</span>
<span class="t" style="left:1044px;top:563px;font-size:10px;color:#808080;font-weight:bold">·pro</span>
<div id="scroll" class="a"></div>
<div id="thumb" class="a"></div>
</body></html>
